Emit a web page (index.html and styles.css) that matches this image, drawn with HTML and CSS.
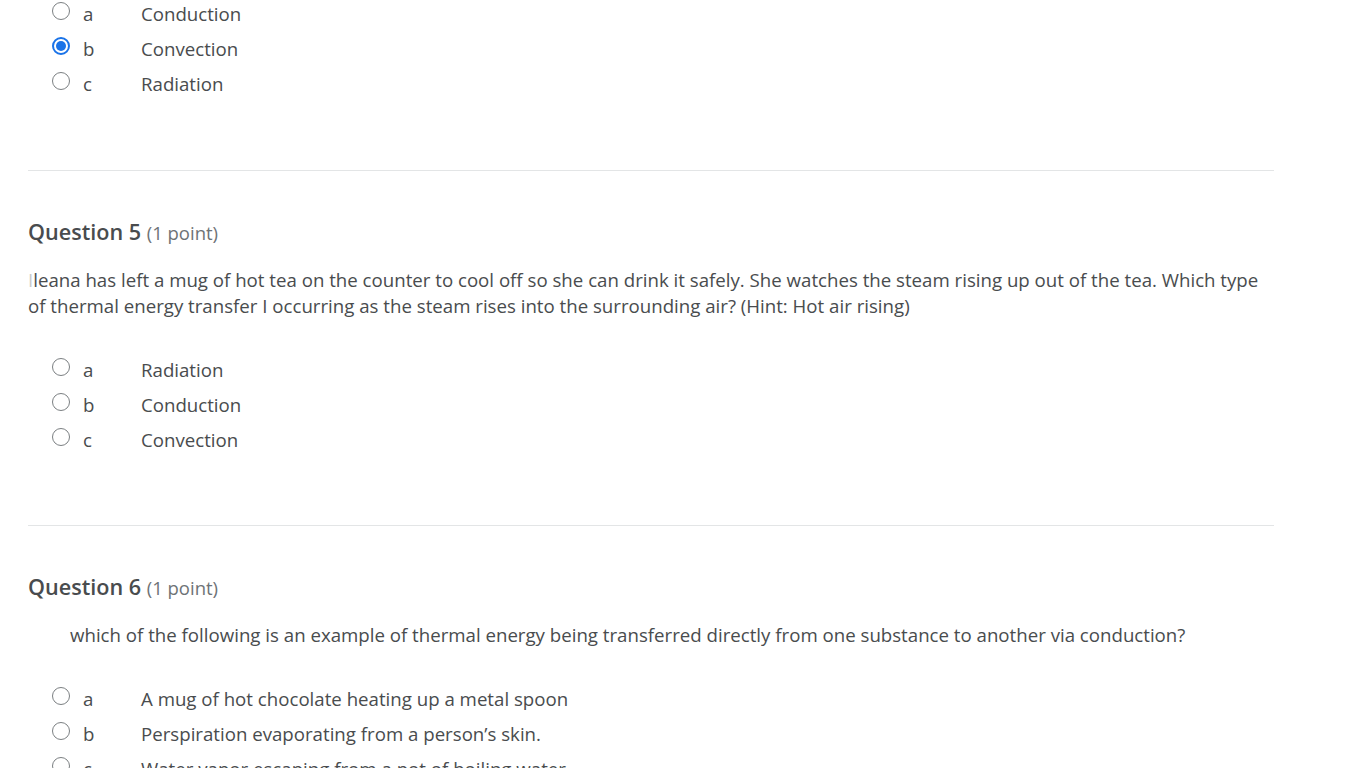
FILE: index.html
```html
<!DOCTYPE html>
<html lang="en">
<head>
<meta charset="utf-8">
<title>Quiz</title>
<link rel="stylesheet" href="styles.css">
</head>
<body>
<main class="quiz">
  <section class="question first">
    <ul class="options">
      <li class="option"><span class="radio"></span><span class="letter">a</span><span class="answer">Conduction</span></li>
      <li class="option"><span class="radio checked"></span><span class="letter">b</span><span class="answer">Convection</span></li>
      <li class="option"><span class="radio"></span><span class="letter">c</span><span class="answer">Radiation</span></li>
    </ul>
  </section>
  <section class="question">
    <h2 class="q-title">Question 5 <span class="points">(1 point)</span></h2>
    <p class="q-text"><span class="faint">I</span>leana has left a mug of hot tea on the counter to cool off so she can drink it safely. She watches the steam rising up out of the tea. Which type of thermal energy transfer I occurring as the steam rises into the surrounding air? (Hint: Hot air rising)</p>
    <ul class="options">
      <li class="option"><span class="radio"></span><span class="letter">a</span><span class="answer">Radiation</span></li>
      <li class="option"><span class="radio"></span><span class="letter">b</span><span class="answer">Conduction</span></li>
      <li class="option"><span class="radio"></span><span class="letter">c</span><span class="answer">Convection</span></li>
    </ul>
  </section>
  <section class="question">
    <h2 class="q-title">Question 6 <span class="points">(1 point)</span></h2>
    <p class="q-text indented">which of the following is an example of thermal energy being transferred directly from one substance to another via conduction?</p>
    <ul class="options">
      <li class="option"><span class="radio"></span><span class="letter">a</span><span class="answer">A mug of hot chocolate heating up a metal spoon</span></li>
      <li class="option"><span class="radio"></span><span class="letter">b</span><span class="answer">Perspiration evaporating from a person’s skin.</span></li>
      <li class="option"><span class="radio"></span><span class="letter">c</span><span class="answer">Water vapor escaping from a pot of boiling water.</span></li>
    </ul>
  </section>
</main>
</body>
</html>
```

FILE: styles.css
```css
html, body {
  margin: 0;
  padding: 0;
  background: #ffffff;
  overflow: hidden;
}

body {
  font-family: "Open Sans", "Noto Sans", sans-serif;
  color: #494c4e;
}

.quiz {
  width: 1246px;
  margin: -4px 0 0 28px;
}

.question {
  border-top: 1px solid #e3e5e6;
  padding-top: 46px;
  padding-bottom: 68px;
}

.question.first {
  border-top: none;
  padding-top: 0;
  padding-bottom: 69px;
}

.q-title {
  margin: 0;
  font-size: 21.6px;
  line-height: 30px;
  font-weight: 600;
  color: #494c4e;
}

.points {
  font-size: 18.5px;
  font-weight: 400;
  color: #6e7376;
}

.q-text {
  margin: 19px 0 33px;
  font-size: 18.66px;
  line-height: 26px;
}

.q-text.indented {
  padding-left: 42px;
}

.faint {
  color: #c9cbcc;
}

.options {
  list-style: none;
  margin: 0;
  padding: 0 0 0 24px;
}

.option {
  display: flex;
  align-items: center;
  height: 35px;
  font-size: 18.66px;
}

.radio {
  box-sizing: border-box;
  width: 18px;
  height: 18px;
  border: 1.5px solid #7b7f82;
  border-radius: 50%;
  margin-top: -5px;
  flex: none;
  position: relative;
}

.radio.checked {
  border: 2px solid #1a73e8;
}

.radio.checked::after {
  content: "";
  position: absolute;
  left: 2px;
  top: 2px;
  width: 10px;
  height: 10px;
  border-radius: 50%;
  background: #1a73e8;
}

.letter {
  width: 58px;
  margin-left: 13px;
  flex: none;
}

.answer {
  white-space: nowrap;
}
```
